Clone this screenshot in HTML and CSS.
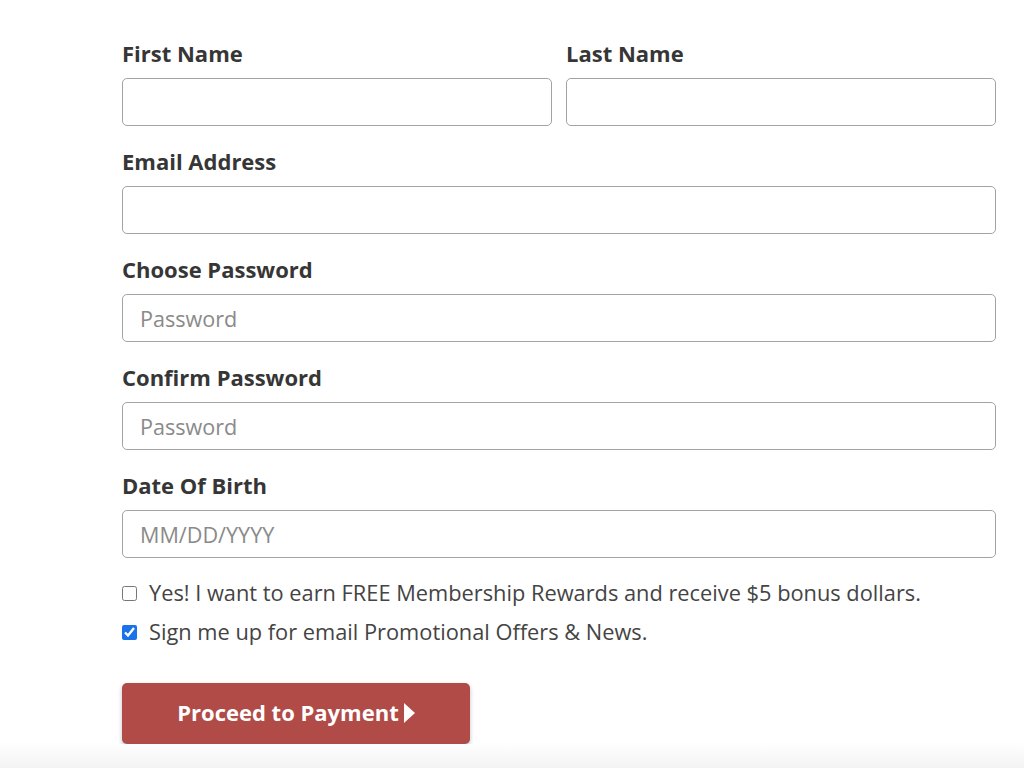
FILE: index.html
```html
<!DOCTYPE html>
<html lang="en">
<head>
<meta charset="utf-8">
<title>Create Account</title>
<link rel="stylesheet" href="styles.css">
</head>
<body>
<form class="form">
  <div class="row">
    <div class="field">
      <label class="label" for="fn">First Name</label>
      <input class="input" id="fn" type="text">
    </div>
    <div class="field">
      <label class="label" for="ln">Last Name</label>
      <input class="input" id="ln" type="text">
    </div>
  </div>
  <div class="field">
    <label class="label" for="em">Email Address</label>
    <input class="input" id="em" type="email">
  </div>
  <div class="field">
    <label class="label" for="pw">Choose Password</label>
    <input class="input" id="pw" type="password" placeholder="Password">
  </div>
  <div class="field">
    <label class="label" for="pw2">Confirm Password</label>
    <input class="input" id="pw2" type="password" placeholder="Password">
  </div>
  <div class="field">
    <label class="label" for="dob">Date Of Birth</label>
    <input class="input" id="dob" type="text" placeholder="MM/DD/YYYY">
  </div>
  <div class="checks">
    <label class="check"><input type="checkbox" class="box"><span>Yes! I want to earn FREE Membership Rewards and receive $5 bonus dollars.</span></label>
    <label class="check"><input type="checkbox" class="box" checked><span>Sign me up for email Promotional Offers &amp; News.</span></label>
  </div>
  <button type="button" class="btn"><span class="btn-text">Proceed to Payment</span><svg class="arrow" width="11" height="20" viewBox="0 0 11 20"><polygon points="0,0 11,10 0,20" fill="#fff"/></svg></button>
</form>
</body>
</html>
```
FILE: styles.css
```css
html {
  background: linear-gradient(to bottom, #ffffff 742px, #f3f3f3 768px);
  min-height: 100%;
}
body {
  margin: 0;
  font-family: "Open Sans", "Liberation Sans", sans-serif;
  color: #333;
}
.form {
  width: 874px;
  padding: 41px 0 0 122px;
  display: flex;
  flex-direction: column;
}
.row {
  display: flex;
  gap: 14px;
}
.row .field {
  flex: 1;
}
.field {
  display: flex;
  flex-direction: column;
  margin-bottom: 23px;
}
.label {
  font-size: 22px;
  font-weight: 700;
  line-height: 24px;
  color: #363636;
  margin-bottom: 13px;
}
.input {
  box-sizing: border-box;
  height: 48px;
  border: 1px solid #a3a3a3;
  border-radius: 5px;
  padding: 0 17px;
  font-family: inherit;
  font-size: 21.6px;
  color: #333;
  background: #fff;
  outline: none;
}
.input::placeholder {
  color: #8a8a8a;
}
.checks {
  display: flex;
  flex-direction: column;
  gap: 11px;
  margin-top: -2px;
}
.check {
  display: flex;
  align-items: center;
  height: 28px;
  font-size: 21.8px;
  line-height: 28px;
  color: #444;
}
.box {
  width: 15px;
  height: 15px;
  margin: 0 12px 0 0;
  accent-color: #1a73e8;
}
.btn {
  margin-top: 37px;
  width: 348px;
  height: 61px;
  padding: 0 0 4px;
  border: none;
  border-radius: 5px;
  background: #b04b48;
  color: #fff;
  font-family: inherit;
  font-size: 22px;
  font-weight: 700;
  display: flex;
  align-items: center;
  justify-content: center;
  gap: 5px;
  box-shadow: 0 2px 4px rgba(0, 0, 0, 0.25);
  cursor: pointer;
}
.btn-text {
  line-height: 26px;
}
.arrow {
  display: block;
  margin-top: 3px;
}
```
